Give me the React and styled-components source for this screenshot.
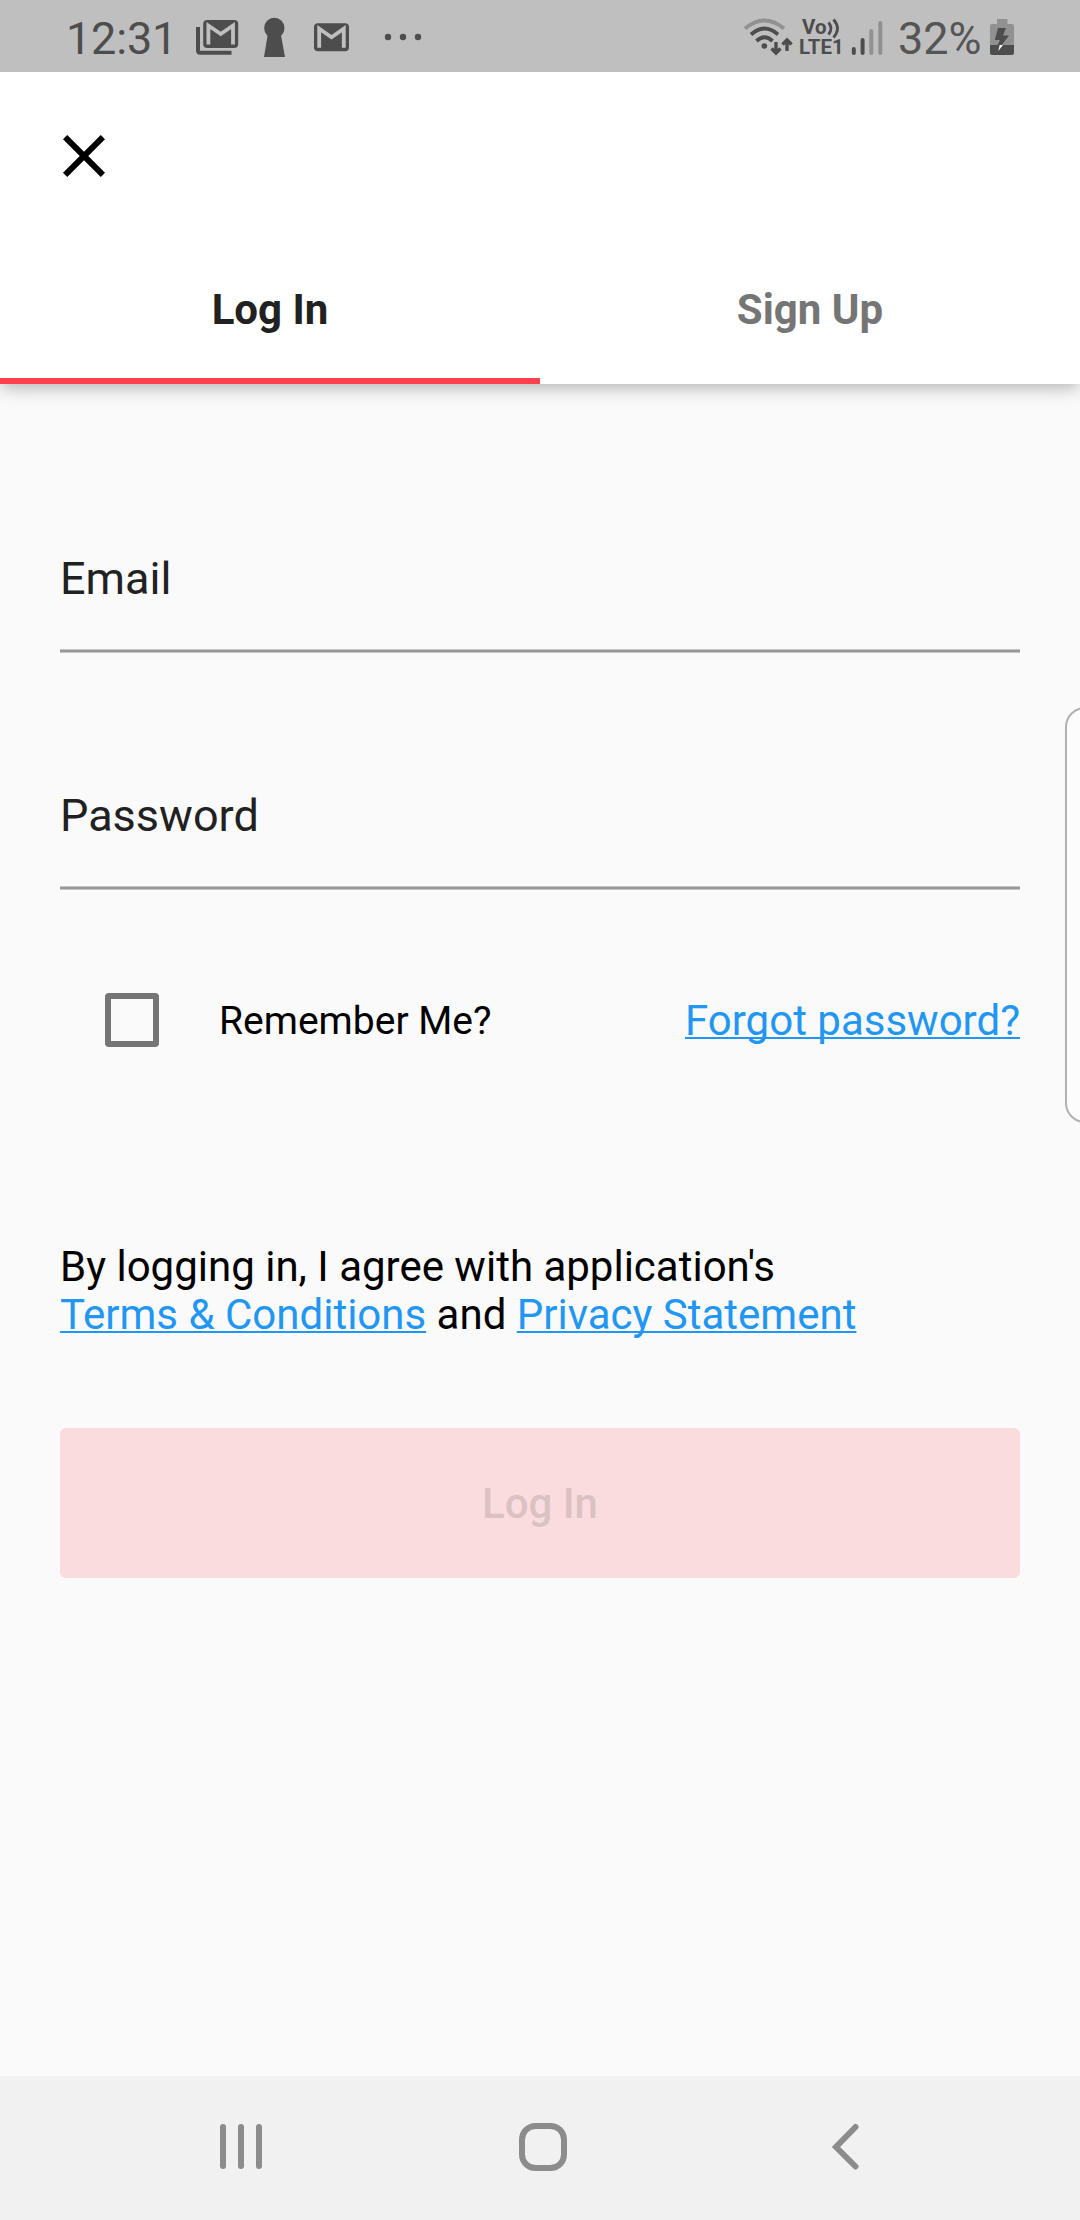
import React from "react";
import styled, { createGlobalStyle } from "styled-components";

const GlobalStyle = createGlobalStyle`
  * { box-sizing: border-box; }
  body { margin: 0; background: #fafafa; font-family: Roboto, sans-serif; }
`;

const Screen = styled.div`
  position: relative;
  display: flex;
  flex-direction: column;
  width: 1080px;
  height: 2220px;
  overflow: hidden;
  background: #fafafa;
`;

const StatusBar = styled.div`
  display: flex;
  justify-content: space-between;
  height: 72px;
  flex: none;
  padding: 0 64px 0 66px;
  background: #bfbfbf;
  color: #4d4d4d;
`;

const StatusGroup = styled.div`
  display: flex;
  align-items: flex-start;
`;

const StatusText = styled.span`
  width: ${(p) => p.$width}px;
  font-size: 45px;
  line-height: 77px;
  letter-spacing: ${(p) => p.$spacing || 0}px;
  white-space: nowrap;
  color: ${(p) => p.$color || "inherit"};
`;

const StatusIcon = styled.svg`
  display: block;
  flex: none;
  overflow: visible;
`;

const NetworkLabel = styled.div`
  display: flex;
  flex-direction: column;
  width: 52px;
  padding: 17px 0 0 1px;
  font-size: 20.5px;
  font-weight: 700;
  line-height: 20px;
`;

const NetworkLine = styled.div`
  display: flex;
  height: 20px;
  padding-left: ${(p) => p.$indent || 0}px;
`;

const Header = styled.header`
  position: relative;
  flex: none;
  background: #fff;
  box-shadow: 0 6px 14px -2px rgba(0, 0, 0, 0.22), 0 4px 26px rgba(0, 0, 0, 0.08);
  clip-path: inset(0 0 -60px 0);
`;

const Toolbar = styled.div`
  display: flex;
  align-items: center;
  height: 168px;
  padding-left: 48px;
`;

const IconButton = styled.button`
  display: flex;
  padding: 0;
  border: 0;
  background: none;
`;

const Tabs = styled.div`
  display: grid;
  grid-template-columns: 1fr 1fr;
  height: 144px;
`;

const Tab = styled.button`
  padding: 0;
  border: 0;
  border-bottom: 6px solid ${(p) => (p.$active ? "#ff414e" : "transparent")};
  background: none;
  font: 700 42px Roboto, sans-serif;
  color: ${(p) => (p.$active ? "#212121" : "#757575")};
`;

const Form = styled.main`
  display: flex;
  flex-direction: column;
  flex: 1;
  padding: 165px 60px 0;
`;

const Field = styled.label`
  display: flex;
  flex-direction: column;
  gap: 40px;
  margin-bottom: ${(p) => p.$after}px;
  font-size: 45px;
  line-height: 60px;
  color: #212121;
`;

const Underline = styled.span`
  height: 4px;
  border: solid #c6c6c6;
  border-width: 1px 0;
  background: #979797;
`;

const OptionsRow = styled.div`
  display: flex;
  align-items: center;
  justify-content: space-between;
  height: 108px;
`;

const Remember = styled.label`
  display: flex;
  align-items: center;
  gap: 60px;
  padding-left: 45px;
  font-size: 39px;
  color: #000;
`;

const RememberText = styled.span`
  padding-top: 2px;
`;

const CheckBox = styled.span`
  width: 54px;
  height: 54px;
  border: 6px solid #757575;
  border-radius: 4px;
`;

const Link = styled.a`
  font-size: 42px;
  color: #2196f3;
  text-decoration: underline;
  text-decoration-thickness: 2px;
  text-underline-offset: 2px;
  text-decoration-skip-ink: none;
`;

const Terms = styled.p`
  margin: 169px 0 89px;
  font-size: 42px;
  line-height: 48px;
  color: #000;
`;

const SubmitButton = styled.button`
  height: 150px;
  padding: 1px 0 0;
  border: 0;
  border-radius: 6px;
  background: #fadcde;
  font: 500 42px Roboto, sans-serif;
  color: #dcc1c3;
`;

const NavBar = styled.nav`
  display: flex;
  justify-content: space-between;
  align-items: center;
  flex: none;
  height: 144px;
  padding: 0 216px 0 217px;
  background: #f1f1f1;
`;

const EdgeHandle = styled.div`
  position: absolute;
  top: 707px;
  right: -30px;
  width: 45px;
  height: 416px;
  border: 2px solid #b1b1b1;
  border-radius: 20px;
  background: #fcfcfc;
`;

const MailCard = ({ x, y }) => (
  <g transform={`translate(${x} ${y})`}>
    <rect width="35" height="28" rx="4" fill="#4d4d4d" />
    <path d="M5.2 24.5V5.5L17.5 14L29.8 5.5V24.5" fill="none" stroke="#bfbfbf" strokeWidth="3.8" />
  </g>
);

const NotificationIcons = () => (
  <StatusIcon width="240" height="72" viewBox="190 0 240 72">
    <path d="M198 27V50.500Q198 52.700 200.200 52.700H231.500" fill="none" stroke="#4d4d4d" strokeWidth="4" />
    <MailCard x={203.200} y={20} />
    <circle cx="274.300" cy="28" r="10.200" fill="#4d4d4d" />
    <path d="M268 33H280.600L285 57H264Z" fill="#4d4d4d" />
    <MailCard x={314} y={23.200} />
    {[388, 403, 418].map((cx) => (
      <circle key={cx} cx={cx} cy="37" r="3.200" fill="#4d4d4d" />
    ))}
  </StatusIcon>
);

const WifiIcon = () => (
  <StatusIcon width="54" height="72" viewBox="744 0 54 72">
    <g fill="none" strokeWidth="3.800">
      <path d="M745 28.500Q764.500 12.500 784 28.500" stroke="#919191" />
      <path d="M751 34.500Q764.500 22.500 778 34.500" stroke="#4d4d4d" />
      <path d="M756.500 41Q764.500 33.500 772.500 41" stroke="#4d4d4d" />
      <path d="M776 42V52M771.500 48.500L776 53L780.500 48.500M787 51V41M782.500 44.500L787 40L791.500 44.500" stroke="#4d4d4d" strokeWidth="3.400" />
    </g>
    <circle cx="764.300" cy="46" r="2.800" fill="#4d4d4d" />
  </StatusIcon>
);

const VoiceWaves = () => (
  <StatusIcon width="14" height="20" viewBox="826 17 14 20">
    <path d="M827.500 22.500Q832.500 28.500 827.500 34.500M832.500 19.500Q840.500 28.500 832.500 37.500" fill="none" stroke="#4d4d4d" strokeWidth="2.800" />
  </StatusIcon>
);

const SignalIcon = () => (
  <StatusIcon width="48" height="72" viewBox="850 0 48 72">
    <g strokeWidth="4" strokeLinecap="round">
      <path d="M853.800 49V53M862.600 40V53" stroke="#4d4d4d" />
      <path d="M871.300 31V53M880.300 23V53" stroke="#919191" />
    </g>
  </StatusIcon>
);

const BatteryIcon = () => (
  <StatusIcon width="26" height="72" viewBox="990 0 26 72">
    <path d="M997 19H1007.500V24H1012Q1014 24 1014 26V45H990V26Q990 24 992 24H997Z" fill="#919191" />
    <path d="M990 45H1014V53Q1014 55 1012 55H992Q990 55 990 53Z" fill="#4d4d4d" />
    <path d="M998 28H1006L1003 35.500H1009L1001.800 45H997.500L1000 40H994.800Z" fill="#4d4d4d" />
    <path d="M999.700 45H1003L998.300 51Z" fill="#fff" />
  </StatusIcon>
);

export default function App() {
  return (
    <>
      <GlobalStyle />
      <Screen>
        <StatusBar>
          <StatusGroup>
            <StatusText $width={124} $spacing={-0.2}>12:31</StatusText>
            <NotificationIcons />
          </StatusGroup>
          <StatusGroup>
            <WifiIcon />
            <NetworkLabel>
              <NetworkLine $indent={3}>
                Vo
                <VoiceWaves />
              </NetworkLine>
              <NetworkLine>LTE1</NetworkLine>
            </NetworkLabel>
            <SignalIcon />
            <StatusText $width={92} $color="#555">32%</StatusText>
            <BatteryIcon />
          </StatusGroup>
        </StatusBar>
        <Header>
          <Toolbar>
            <IconButton aria-label="Close">
              <svg width="72" height="72" viewBox="0 0 24 24">
                <path d="M19 6.410L17.590 5 12 10.590 6.410 5 5 6.410 10.590 12 5 17.590 6.410 19 12 13.410 17.590 19 19 17.590 13.410 12z" />
              </svg>
            </IconButton>
          </Toolbar>
          <Tabs>
            <Tab $active>Log In</Tab>
            <Tab>Sign Up</Tab>
          </Tabs>
        </Header>
        <Form>
          <Field $after={133}>
            Email
            <Underline />
          </Field>
          <Field $after={76}>
            Password
            <Underline />
          </Field>
          <OptionsRow>
            <Remember>
              <CheckBox />
              <RememberText>Remember Me?</RememberText>
            </Remember>
            <Link>Forgot password?</Link>
          </OptionsRow>
          <Terms>
            By logging in, I agree with application's
            <br />
            <Link>Terms &amp; Conditions</Link> and <Link>Privacy Statement</Link>
          </Terms>
          <SubmitButton>Log In</SubmitButton>
        </Form>
        <NavBar>
          <svg width="48" height="50" viewBox="217 2123 48 50">
            <path d="M223 2127V2166M241 2127V2166M259 2127V2166" stroke="#8c8c8c" strokeWidth="6" strokeLinecap="round" />
          </svg>
          <svg width="50" height="50" viewBox="518 2123 50 50">
            <rect x="522" y="2126" width="42" height="42" rx="13.500" fill="none" stroke="#8c8c8c" strokeWidth="6" />
          </svg>
          <svg width="43" height="50" viewBox="821 2123 43 50">
            <path d="M855.500 2127L836 2147L855.500 2166.500" fill="none" stroke="#8c8c8c" strokeWidth="6" strokeLinecap="round" />
          </svg>
        </NavBar>
        <EdgeHandle />
      </Screen>
    </>
  );
}
